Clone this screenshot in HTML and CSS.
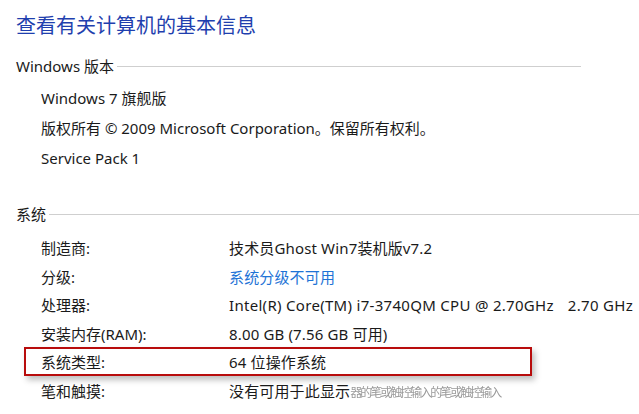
FILE: index.html
```html
<!DOCTYPE html>
<html lang="zh-CN">
<head>
<meta charset="utf-8">
<link rel="stylesheet" href="styles.css">
</head>
<body>
<div class="page">
  <h1 class="title">查看有关计算机的基本信息</h1>

  <section class="group">
    <div class="group-head"><span class="group-name">Windows 版本</span><span class="rule rule-short"></span></div>
    <div class="lines">
      <div class="line">Windows 7 旗舰版</div>
      <div class="line">版权所有 © 2009 Microsoft Corporation。保留所有权利。</div>
      <div class="line">Service Pack 1</div>
    </div>
  </section>

  <section class="group group-sys">
    <div class="group-head"><span class="group-name">系统</span><span class="rule"></span></div>
    <div class="rows">
      <div class="row"><span class="key">制造商:</span><span class="val">技术员Ghost Win7装机版v7.2</span></div>
      <div class="row"><span class="key">分级:</span><span class="val link">系统分级不可用</span></div>
      <div class="row"><span class="key">处理器:</span><span class="val cpu">Intel(R) Core(TM) i7-3740QM CPU @ 2.70GHz<span class="gap">2.70 GHz</span></span></div>
      <div class="row"><span class="key">安装内存(RAM):</span><span class="val">8.00 GB (7.56 GB 可用)</span></div>
      <div class="row row-mark"><span class="key">系统类型:</span><span class="val">64 位操作系统</span></div>
      <div class="row"><span class="key">笔和触摸:</span><span class="val">没有可用于此显示<span class="blur">器的笔或触控输入的笔或触控输入</span></span></div>
    </div>
  </section>
</div>
</body>
</html>
```

FILE: styles.css
```css
html, body {
  margin: 0;
  padding: 0;
  background: #fff;
}
body {
  width: 639px;
  height: 414px;
  overflow: hidden;
  font-family: "Noto Sans", "Noto Sans CJK SC", sans-serif;
  color: #1a1a1a;
  font-size: 15px;
}
.page {
  padding: 10px 0 0 16px;
}
.title {
  margin: 0;
  font-family: "Noto Sans CJK SC", sans-serif;
  font-weight: 400;
  font-size: 20px;
  line-height: 30px;
  color: #1f3fae;
}
.group {
  margin-top: 14px;
}
.group-head {
  display: flex;
  align-items: center;
  height: 22px;
}
.group-name {
  white-space: nowrap;
  margin-right: 3px;
}
.rule {
  flex: 1;
  height: 1px;
  background: #cfcfcf;
  margin-top: 3px;
}
.rule-short {
  flex: none;
  width: 464px;
}
.lines {
  padding: 8px 0 0 25px;
}
.line {
  height: 30px;
  line-height: 29px;
  white-space: nowrap;
}
.group-sys {
  margin-top: 28px;
}
.rows {
  padding-top: 10px;
}
.row {
  display: flex;
  height: 28.5px;
  line-height: 29px;
  white-space: nowrap;
  position: relative;
}
.key {
  width: 188px;
  padding-left: 25px;
  flex: none;
}
.val {
  flex: none;
  letter-spacing: 0.15px;
}
.cpu {
  letter-spacing: 0.3px;
}
.gap {
  margin-left: 14px;
}
.link {
  color: #1e73d6;
}
.row-mark::after {
  content: "";
  position: absolute;
  left: 8px;
  top: -1px;
  width: 504px;
  height: 25px;
  border: 2px solid #b80c0c;
  box-shadow: 3px 4px 6px rgba(0, 0, 0, 0.25);
}
.blur {
  color: #9a9a9a;
  letter-spacing: -2px;
  font-size: 12px;
  filter: blur(0.6px);
}
```
